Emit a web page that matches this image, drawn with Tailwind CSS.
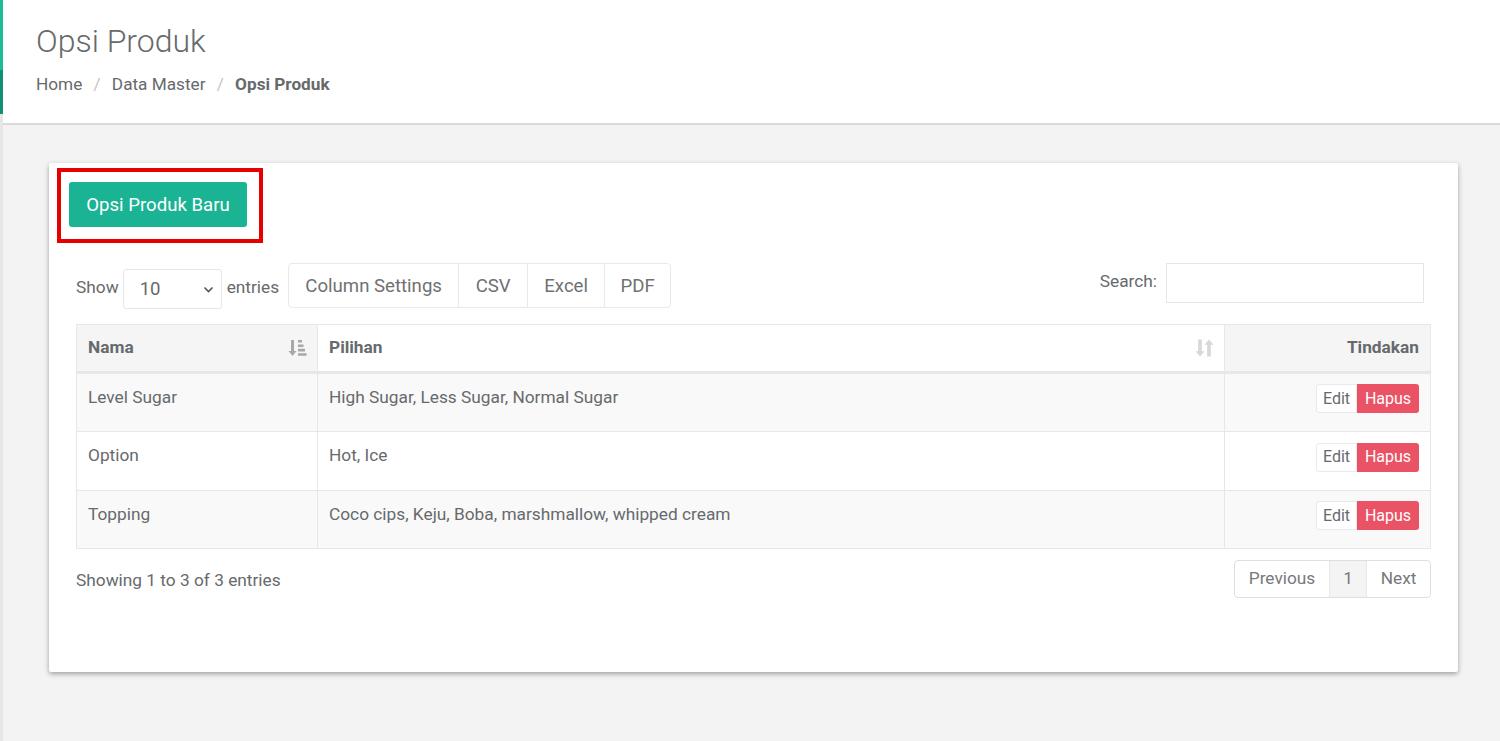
<!DOCTYPE html>
<html>
<head>
<meta charset="utf-8">
<script src="https://cdn.jsdelivr.net/npm/@tailwindcss/browser@4"></script>
</head>
<body class="bg-[#f3f3f4] font-['Roboto',sans-serif] text-[#676a6c]">
<div class="relative flex h-[741px] w-[1500px] overflow-hidden">
  <aside class="flex w-[3px] shrink-0 flex-col bg-[#e6e6e6]">
    <div class="h-[70px] bg-[#1abc9c]"></div>
    <div class="h-[44px] bg-[#148f77]"></div>
  </aside>
  <main class="flex min-w-0 flex-1 flex-col">
    <header class="h-[125px] border-b-2 border-[#d9d9d9] bg-white pl-[33px] pt-[22px]">
      <h1 class="text-[32px] font-light leading-[38px] text-[#676a6c]">Opsi Produk</h1>
      <nav class="mt-[5px] flex items-center text-[17.2px] leading-[38px]">
        <span>Home</span><span class="px-[11.25px] text-[#c4c4c4]">/</span><span>Data Master</span><span class="px-[11.25px] text-[#c4c4c4]">/</span><span class="font-bold">Opsi Produk</span>
      </nav>
    </header>
    <section class="ml-[46px] mt-[38px] h-[509px] w-[1409px] rounded-[2px] bg-white px-[20px] pt-[19px] shadow-[0_2px_5px_rgba(0,0,0,0.35)]">
      <button class="h-[45px] w-[178px] rounded-[3px] bg-[#1ab394] pt-[2px] text-[18.6px] text-white">Opsi Produk Baru</button>
      <div class="mt-[36px] ml-[7px] flex h-[46px] w-[1348px] items-start justify-between">
        <div class="flex items-start text-[17.3px]">
          <span class="mt-[14px] leading-[20px]">Show</span>
          <div class="relative ml-[4px] mt-[6px] flex h-[40px] w-[99px] items-center rounded-[3px] border border-[#e5e6e7] pl-[16px] pt-[2px] text-[18.6px]">10
            <svg class="absolute right-[7px] top-[16px] h-[7px] w-[11px]" viewBox="0 0 11 7" fill="none" stroke="#555" stroke-width="1.6"><path d="M1.5 1.5 5.5 5.5 9.5 1.5"/></svg>
          </div>
          <span class="ml-[5px] mt-[14px] leading-[20px]">entries</span>
          <div class="ml-[9px] flex h-[45px] rounded-[4px] border border-[#e7eaec] text-[18.6px] text-[#6f7173]">
            <span class="flex w-[170px] items-center justify-center border-r border-[#e7eaec] pt-[2px]">Column Settings</span>
            <span class="flex w-[69px] items-center justify-center border-r border-[#e7eaec] pt-[2px]">CSV</span>
            <span class="flex w-[77px] items-center justify-center border-r border-[#e7eaec] pt-[2px]">Excel</span>
            <span class="flex w-[65px] items-center justify-center pt-[2px]">PDF</span>
          </div>
        </div>
        <div class="flex items-start text-[17.3px]">
          <span class="mt-[8px] leading-[20px]">Search:</span>
          <div class="ml-[9px] h-[40px] w-[258px] border border-[#e5e6e7] bg-white"></div>
        </div>
      </div>
      <table class="ml-[7px] mt-[15px] w-[1354px] table-fixed border-collapse text-[17.3px]">
        <colgroup><col class="w-[241px]"><col class="w-[907px]"><col class="w-[206px]"></colgroup>
        <thead>
          <tr class="h-[48px] border-b-[3px] border-[#e7e7e7]">
            <th class="border border-b-[3px] border-[#e7e7e7] bg-[#f5f5f6] px-[11px] text-left font-bold">
              <div class="flex items-center justify-between">Nama
                <svg class="-mr-[1px] h-[20px] w-[19px]" viewBox="0 0 19 18" fill="#a8a8a8"><path d="M3 1h3v11h2.500L4.500 17 .5 12H3z"/><path d="M10 1h4v2.600h-4zM10 5.400h5.500V8H10zM10 9.800h7v2.600h-7zM10 14.200h8.500v2.600H10z"/></svg>
              </div>
            </th>
            <th class="border border-b-[3px] border-[#e7e7e7] bg-white px-[11px] text-left font-bold">
              <div class="flex items-center justify-between">Pilihan
                <svg class="-mr-[1px] h-[20px] w-[19px]" viewBox="0 0 18 18" fill="#d8d8d8"><path d="M3 1h3.500v11H9L4.750 17 .5 12H3z"/><path d="M11.500 17H15V6h2.500L13.250 1 9 6h2.500z"/></svg>
              </div>
            </th>
            <th class="border border-b-[3px] border-[#e7e7e7] bg-[#f5f5f6] px-[11px] text-right font-bold">Tindakan</th>
          </tr>
        </thead>
        <tbody>
          <tr class="h-[59px]">
            <td class="border border-[#e7e7e7] bg-[#f9f9f9] px-[11px] pb-[9px]">Level Sugar</td>
            <td class="border border-[#e7e7e7] bg-[#f9f9f9] px-[11px] pb-[9px]">High Sugar, Less Sugar, Normal Sugar</td>
            <td class="border border-[#e7e7e7] bg-[#f9f9f9] px-[11px] pb-[8px]">
              <div class="flex justify-end text-[16px]"><span class="flex h-[29px] w-[41px] items-center justify-center rounded-l-[3px] border border-[#e7eaec] bg-white">Edit</span><span class="flex h-[29px] w-[62px] items-center justify-center rounded-r-[3px] bg-[#ea5266] text-white">Hapus</span></div>
            </td>
          </tr>
          <tr class="h-[59px]">
            <td class="border border-[#e7e7e7] bg-white px-[11px] pb-[10px]">Option</td>
            <td class="border border-[#e7e7e7] bg-white px-[11px] pb-[10px]">Hot, Ice</td>
            <td class="border border-[#e7e7e7] bg-white px-[11px] pb-[8px]">
              <div class="flex justify-end text-[16px]"><span class="flex h-[29px] w-[41px] items-center justify-center rounded-l-[3px] border border-[#e7eaec] bg-white">Edit</span><span class="flex h-[29px] w-[62px] items-center justify-center rounded-r-[3px] bg-[#ea5266] text-white">Hapus</span></div>
            </td>
          </tr>
          <tr class="h-[58px]">
            <td class="border border-[#e7e7e7] bg-[#f9f9f9] px-[11px] pb-[9px]">Topping</td>
            <td class="border border-[#e7e7e7] bg-[#f9f9f9] px-[11px] pb-[9px]">Coco cips, Keju, Boba, marshmallow, whipped cream</td>
            <td class="border border-[#e7e7e7] bg-[#f9f9f9] px-[11px] pb-[8px]">
              <div class="flex justify-end text-[16px]"><span class="flex h-[29px] w-[41px] items-center justify-center rounded-l-[3px] border border-[#e7eaec] bg-white">Edit</span><span class="flex h-[29px] w-[62px] items-center justify-center rounded-r-[3px] bg-[#ea5266] text-white">Hapus</span></div>
            </td>
          </tr>
        </tbody>
      </table>
      <div class="ml-[7px] mt-[11px] flex w-[1355px] items-start justify-between text-[17.3px]">
        <span class="mt-[10px] leading-[20px]">Showing 1 to 3 of 3 entries</span>
        <div class="flex h-[38px] rounded-[4px] border border-[#dfdfdf] text-[#77797b]">
          <span class="flex w-[95px] items-center justify-center border-r border-[#e7eaec]">Previous</span>
          <span class="flex w-[37px] items-center justify-center border-r border-[#e7eaec] bg-[#f4f4f4]">1</span>
          <span class="flex w-[63px] items-center justify-center">Next</span>
        </div>
      </div>
    </section>
  </main>
  <div class="absolute left-[57px] top-[168px] h-[75px] w-[206px] border-[4px] border-[#e60000]"></div>
</div>
</body>
</html>
